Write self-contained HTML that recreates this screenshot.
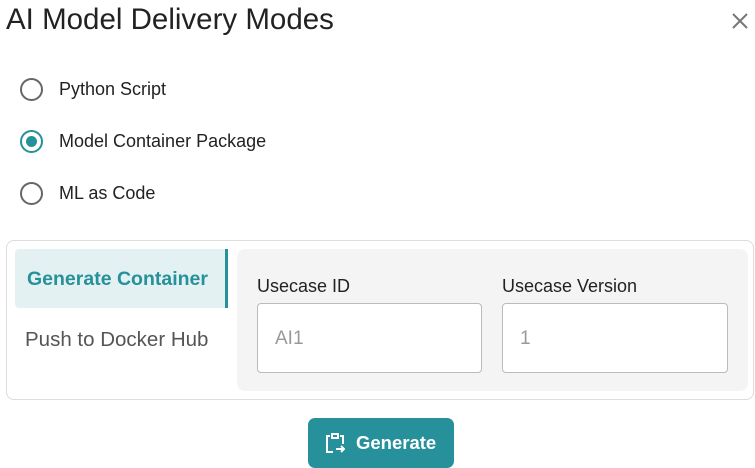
<!DOCTYPE html><html><head><style>
body{margin:0;width:755px;height:468px;background:#fff;font-family:"Liberation Sans",sans-serif;position:relative;overflow:hidden;color:#222}
.a{position:absolute}
.r{position:absolute;left:20px;width:23px;height:23px;box-sizing:border-box;border:2.5px solid #666;border-radius:50%}
.l{position:absolute;left:59px;font-size:18px;color:#222}
</style></head><body>
<div class="a" style="left:6px;top:3px;font-size:29.5px;color:#222">AI Model Delivery Modes</div>
<svg class="a" style="left:731px;top:12px" width="18" height="18"><path d="M2 2L16 16M16 2L2 16" stroke="#777" stroke-width="2"/></svg>
<div class="r" style="top:78px"></div><div class="l" style="top:79px">Python Script</div>
<div class="r" style="top:130px;border-color:#26919a"><div style="position:absolute;left:3.5px;top:3.5px;width:11px;height:11px;border-radius:50%;background:#26919a"></div></div><div class="l" style="top:131px">Model Container Package</div>
<div class="r" style="top:182px"></div><div class="l" style="top:183px">ML as Code</div>
<div class="a" style="left:6px;top:240px;width:748px;height:160px;border:1px solid #ddd;border-radius:8px;box-sizing:border-box"></div>
<div class="a" style="left:15px;top:249px;width:210px;height:59px;background:#e3f1f2;border-right:3px solid #26919a;border-radius:4px 0 0 4px"></div>
<div class="a" style="left:27px;top:268px;font-size:19.5px;font-weight:bold;color:#26919a">Generate Container</div>
<div class="a" style="left:25px;top:328px;font-size:20.5px;color:#555">Push to Docker Hub</div>
<div class="a" style="left:237px;top:249px;width:511px;height:142px;background:#f4f4f4;border-radius:8px"></div>
<div class="a" style="left:257px;top:276px;font-size:18px">Usecase ID</div>
<div class="a" style="left:502px;top:276px;font-size:18px">Usecase Version</div>
<div class="a" style="left:257px;top:303px;width:225px;height:70px;background:#fff;border:1px solid #bbb;border-radius:4px;box-sizing:border-box"></div>
<div class="a" style="left:502px;top:303px;width:226px;height:70px;background:#fff;border:1px solid #bbb;border-radius:4px;box-sizing:border-box"></div>
<div class="a" style="left:275px;top:328px;font-size:19px;color:#999">AI1</div>
<div class="a" style="left:520px;top:328px;font-size:19px;color:#999">1</div>
<div class="a" style="left:308px;top:418px;width:146px;height:50px;background:#26919a;border-radius:7px"></div>
<svg class="a" style="left:325px;top:432px" width="20" height="22" fill="none" stroke="#fff" stroke-width="2"><path d="M5 4H2v16h6M15 4h3v8M7 2h6v4H7zM11 17h8M16 14l3 3-3 3"/></svg>
<div class="a" style="left:356px;top:432px;font-size:18.5px;font-weight:bold;color:#fff">Generate</div>
</body></html>
